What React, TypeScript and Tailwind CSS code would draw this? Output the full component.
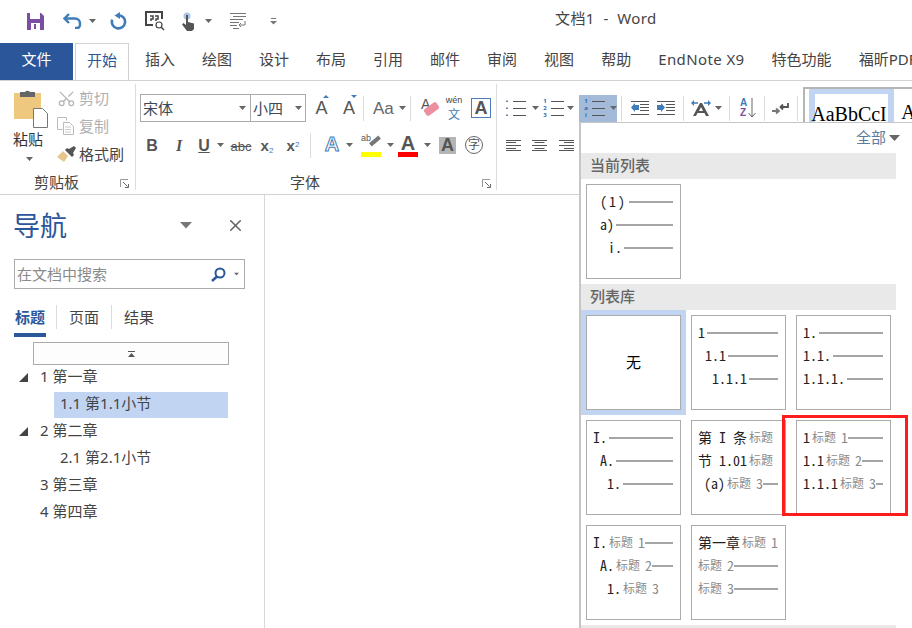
import { X, Scissors } from "lucide-react";

const CJK = { fontFamily: '"Noto Sans", "Noto Sans CJK SC", sans-serif' };

function Caret({ className = "" }: { className?: string }) {
  return (
    <svg width="7" height="4" viewBox="0 0 7 4" className={`shrink-0 ${className}`}>
      <path d="M0 0h7L3.5 4z" fill="#666" />
    </svg>
  );
}

function Launcher() {
  return (
    <svg width="10" height="10" viewBox="0 0 10 10" className="shrink-0">
      <path d="M.5 8V.5H8" fill="none" stroke="#999" />
      <path d="M3 3l4.5 4.5M8.5 5v3.5H5" fill="none" stroke="#666" />
    </svg>
  );
}

function Sep() {
  return <span className="block w-px h-[25px] bg-[#dcdcdc] shrink-0" />;
}

// letters used on toolbar buttons
function Glyph({ children, className = "" }: { children: React.ReactNode; className?: string }) {
  return (
    <span className={`font-['Liberation_Sans',sans-serif] leading-none ${className}`}>{children}</span>
  );
}

function ListLines({ dots }: { dots: string[] }) {
  return (
    <span className="flex flex-col gap-[3px]">
      {dots.map((d) => (
        <span key={d} className="flex items-center gap-[3px] h-[4px]">
          <span className="w-[6px] text-center text-[6px] leading-none text-[#2b6cb0] font-bold">{d}</span>
          <span className="w-[13px] h-px bg-[#555]" />
        </span>
      ))}
    </span>
  );
}

function AlignIcon({ kind }: { kind: "left" | "center" | "right" }) {
  const short =
    kind === "left" ? "M0 2.500h10M0 8.500h10" : kind === "center" ? "M2.500 2.500h10M2.500 8.500h10" : "M5 2.500h10M5 8.500h10";
  return (
    <svg width="15" height="11" viewBox="0 0 15 11">
      <path d={`M0 .5h15M0 5.500h15M0 10.500h15 ${short}`} stroke="#555" fill="none" />
    </svg>
  );
}

function TitleBar() {
  return (
    <div className="flex items-center h-[42px] pl-[27px]">
      <svg width="17" height="17" viewBox="0 0 17 17" className="shrink-0">
        <path d="M0 0h14l3 3v14H0z" fill="#7b4ea3" />
        <path d="M3 0h10v6H3z" fill="#fff" />
        <path d="M4 10h9v7H4z" fill="#fff" />
        <path d="M7 11h2v5H7z" fill="#7b4ea3" />
      </svg>
      <svg width="19" height="16" viewBox="0 0 19 16" className="ml-[19px] shrink-0">
        <path d="M6 1L1.5 5.5 6 10" fill="none" stroke="#3f7cb8" strokeWidth="2.4" />
        <path d="M2 5.5h10a5 5 0 0 1 5 5V12a3 3 0 0 1-3 3h-2" fill="none" stroke="#3f7cb8" strokeWidth="2.4" />
      </svg>
      <Caret className="ml-[7px]" />
      <svg width="18" height="18" viewBox="0 0 18 18" className="ml-[13px] shrink-0">
        <path d="M9.5 3.2a6.600 6.600 0 1 1-6.300 4.500" fill="none" stroke="#3f7cb8" strokeWidth="2.6" />
        <path d="M11 0v7L5.500 3.500z" fill="#3f7cb8" />
      </svg>
      <svg width="20" height="20" viewBox="0 0 20 20" className="ml-[18px] shrink-0">
        <path d="M1 9V1h16v7M1 1v13h7" fill="none" stroke="#444" strokeWidth="2" />
        <path d="M5 5h3v3H6v2M10 5h3v3h-2v2" fill="none" stroke="#444" strokeWidth="1.500" />
        <circle cx="14" cy="14" r="3" fill="none" stroke="#444" strokeWidth="1.200" />
        <path d="M16 16l3 3" stroke="#444" strokeWidth="1.400" />
      </svg>
      <svg width="15" height="19" viewBox="0 0 15 19" className="ml-[16px] shrink-0">
        <circle cx="6" cy="4" r="3.500" fill="#a9c4e6" />
        <path d="M5 3h2v7l6 1.500V17l-2 2H6L1 12.500 2.500 11 5 13z" fill="#555" />
      </svg>
      <Caret className="ml-[9px]" />
      <svg width="18" height="17" viewBox="0 0 18 17" className="ml-[17px] shrink-0">
        <path d="M1 .5h16M4 3.500h13M1 6.500h13M1 9.500h9M1 12.500h7M4 15.500h6" stroke="#777" fill="none" />
        <path d="M16 8v4h-6M12 10l-2 2 2 2" stroke="#777" fill="none" />
      </svg>
      <svg width="7" height="7" viewBox="0 0 7 7" className="ml-[23px] shrink-0">
        <path d="M1 .5h5" stroke="#777" />
        <path d="M0 3h7L3.500 6.500z" fill="#777" />
      </svg>
      <span className="ml-[278px] -mt-[6px] text-[15px] text-[#444] tracking-[0.4px] whitespace-pre">文档1  -  Word</span>
    </div>
  );
}

const tabs = ["插入", "绘图", "设计", "布局", "引用", "邮件", "审阅", "视图", "帮助", "EndNote X9", "特色功能", "福昕PDF"];

function TabBar() {
  return (
    <div className="flex items-end h-[39px] border-b border-[#d2d2d2] text-[15px] text-[#444] whitespace-nowrap overflow-hidden">
      <div className="w-[73px] shrink-0 h-[37px] pb-[4px] bg-[#2b579a] text-white flex items-center justify-center">文件</div>
      <div className="ml-[2px] w-[54px] shrink-0 h-[38px] pb-[4px] bg-white border-x border-t border-[#d2d2d2] text-[#2b579a] flex items-center justify-center -mb-px">
        开始
      </div>
      <div className="flex gap-[27px] ml-[16px] h-[37px] pb-[4px] items-center">
        {tabs.map((t) => (
          <span key={t} className={t === "EndNote X9" ? "tracking-[0.4px]" : ""}>
            {t}
          </span>
        ))}
      </div>
    </div>
  );
}

function Clipboard() {
  return (
    <div className="w-[136px] shrink-0 border-r border-[#dcdcdc] flex flex-col">
      <div className="flex h-[84px]">
        <div className="w-[57px] pl-[13px] flex flex-col items-start pt-[5px]">
          <svg width="35" height="39" viewBox="0 0 35 39" className="ml-[1px]">
            <path d="M0 4h27v26H0z" fill="#edc87e" />
            <path d="M6 3h5a3 3 0 0 1 5 0h5v5H6z" fill="#666" />
            <path d="M19.500 19.500h9l5 5v14h-14z" fill="#fff" stroke="#777" />
          </svg>
          <span className="text-[15px] leading-none mt-[4px] w-[30px] text-center text-[#333]">粘贴</span>
          <Caret className="ml-[13px] mt-[10px]" />
        </div>
        <div className="flex flex-col text-[15px] leading-none">
          <div className="h-[28px] flex items-center gap-[3px] text-[#b0b0b0]">
            <Scissors size={19} strokeWidth={1.6} className="text-[#b5b5b5] -rotate-90" />
            剪切
          </div>
          <div className="h-[28px] flex items-center gap-[5px] text-[#b0b0b0]">
            <svg width="17" height="18" viewBox="0 0 17 18">
              <path d="M.5.5h9v3M.5.5v12h5" fill="none" stroke="#bbb" />
              <path d="M6.500 5.500h6l4 4v8h-10z" fill="#fff" stroke="#bbb" />
              <path d="M8 10h6M8 12.500h6M8 15h6" stroke="#ccc" />
            </svg>
            复制
          </div>
          <div className="h-[28px] flex items-center gap-[3px] text-[#444]">
            <svg width="19" height="16" viewBox="0 0 19 16">
              <path d="M0 11l6-6 5 5-4 6z" fill="#e6c68a" />
              <path d="M8 4l2-2 2 1 5-3 2 2-3 5 1 2-2 2z" fill="#555" />
            </svg>
            格式刷
          </div>
        </div>
      </div>
      <div className="relative h-[22px] pt-[7px] text-[15px] text-[#444] flex items-center justify-center pr-[22px]">
        剪贴板
        <span className="absolute right-[5px] top-[11px]">
          <Launcher />
        </span>
      </div>
    </div>
  );
}

function FontGroup() {
  return (
    <div className="w-[361px] shrink-0 border-r border-[#dcdcdc] flex flex-col">
      <div className="h-[84px] pt-[10px]">
        <div className="flex items-center h-[28px] pl-[4px] text-[#444]">
          <div className="w-[111px] h-[28px] border border-[#ababab] flex items-center pl-[2px] pr-[4px] justify-between text-[15px] text-[#3a4a5a]">
            宋体
            <Caret />
          </div>
          <div className="w-[55px] h-[28px] border border-l-0 border-[#ababab] flex items-center pl-[2px] pr-[3px] justify-between text-[15px] text-[#3a4a5a]">
            小四
            <Caret />
          </div>
          <span className="relative w-[29px] ml-[1px] text-center">
            <Glyph className="text-[18px] text-[#555]">A</Glyph>
            <span className="absolute left-[16px] top-[-1px] w-0 h-0 border-x-[3px] border-x-transparent border-b-[3px] border-b-[#3f7cb8]" />
          </span>
          <span className="relative w-[26px] text-center">
            <Glyph className="text-[18px] text-[#555]">A</Glyph>
            <span className="absolute left-[15px] top-[-1px] w-0 h-0 border-x-[3px] border-x-transparent border-t-[3px] border-t-[#3f7cb8]" />
          </span>
          <span className="ml-[1px]">
            <Sep />
          </span>
          <span className="flex items-center w-[46px] pl-[9px] gap-[5px]">
            <Glyph className="text-[17px] text-[#666]">Aa</Glyph>
            <Caret />
          </span>
          <Sep />
          <span className="relative w-[32px] h-[24px]">
            <Glyph className="absolute left-[10px] top-[1px] text-[14px] text-[#555]">A</Glyph>
            <span className="absolute left-[13px] top-[9px] w-[15px] h-[8px] bg-[#ec8f9e] rounded-[2px] -rotate-[35deg]" />
          </span>
          <span className="w-[22px] h-[26px] flex flex-col items-center justify-between text-[#444]">
            <span className="text-[9px] leading-[11px] font-['Liberation_Sans',sans-serif]">wén</span>
            <span className="text-[12px] leading-[13px] text-[#3f7cb8]">文</span>
          </span>
          <span className="ml-[6px] w-[20px] h-[20px] border border-[#4a7ebb] flex items-center justify-center">
            <Glyph className="text-[18px] text-[#555] font-bold">A</Glyph>
          </span>
        </div>
        <div className="flex items-center h-[28px] mt-[9px] text-[#555]">
          <span className="w-[16px] ml-[8px] text-center">
            <Glyph className="text-[16px] font-bold">B</Glyph>
          </span>
          <span className="w-[16px] ml-[11px] text-center">
            <Glyph className="text-[16px] italic font-bold font-['Liberation_Serif',serif]">I</Glyph>
          </span>
          <span className="w-[16px] ml-[9px] text-center">
            <Glyph className="text-[16px] font-bold underline">U</Glyph>
          </span>
          <Caret className="ml-[5px]" />
          <span className="w-[22px] ml-[6px] text-center">
            <Glyph className="text-[13px] line-through">abc</Glyph>
          </span>
          <span className="w-[20px] ml-[5px] text-center">
            <Glyph className="text-[15px] font-bold">
              x<sub className="text-[8px] text-[#3f7cb8] font-normal">2</sub>
            </Glyph>
          </span>
          <span className="w-[20px] ml-[6px] text-center">
            <Glyph className="text-[15px] font-bold">
              x<sup className="text-[8px] text-[#3f7cb8] font-normal">2</sup>
            </Glyph>
          </span>
          <span className="ml-[7px]">
            <Sep />
          </span>
          <span className="w-[20px] ml-[11px] text-center">
            <Glyph className="text-[20px] font-bold text-white [-webkit-text-stroke:1px_#3f7cb8]">A</Glyph>
          </span>
          <Caret className="ml-[4px]" />
          <span className="relative w-[20px] h-[26px] ml-[8px]">
            <span className="absolute left-0 top-[2px] text-[9px] leading-none font-['Liberation_Sans',sans-serif]">ab</span>
            <span className="absolute left-[8px] top-[7px] w-[12px] h-[4px] bg-[#777] -rotate-[40deg]" />
            <span className="absolute left-0 bottom-[1px] w-[20px] h-[5px] bg-[#ffff00]" />
          </span>
          <Caret className="ml-[6px]" />
          <span className="relative w-[20px] h-[26px] ml-[4px] text-center">
            <Glyph className="text-[20px] font-bold">A</Glyph>
            <span className="absolute left-0 bottom-[1px] w-[20px] h-[5px] bg-[#ff0000]" />
          </span>
          <Caret className="ml-[6px]" />
          <span className="w-[17px] h-[17px] ml-[8px] bg-[#b5b5b5] flex items-center justify-center">
            <Glyph className="text-[18px] font-bold">A</Glyph>
          </span>
          <span className="w-[18px] h-[18px] ml-[9px] rounded-full border border-[#666] flex items-center justify-center text-[12px] leading-none">
            字
          </span>
        </div>
      </div>
      <div className="relative h-[22px] pt-[7px] text-[15px] text-[#444] flex items-center justify-center pr-[22px]">
        字体
        <span className="absolute right-[4px] top-[11px]">
          <Launcher />
        </span>
      </div>
    </div>
  );
}

function ParagraphGroup() {
  return (
    <div className="flex-1 min-w-0 overflow-hidden">
      <div className="h-[28px] mt-[10px] flex items-center">
        <span className="ml-[7px]">
          <ListLines dots={["•", "•", "•"]} />
        </span>
        <Caret className="ml-[6px]" />
        <span className="ml-[3px]">
          <ListLines dots={["1", "2", "3"]} />
        </span>
        <Caret className="ml-[3px]" />
        <span className="ml-[5px] w-[38px] h-[27px] bg-[#a3bad8] shrink-0 flex items-center pl-[4px] gap-[5px]">
          <ListLines dots={["1", "a", "i"]} />
          <Caret />
        </span>
        <span className="ml-[4px]">
          <Sep />
        </span>
        <svg width="18" height="14" viewBox="0 0 18 14" className="ml-[9px] shrink-0">
          <path d="M0 .5h18M9 3.500h9M9 6.500h9M9 9.500h9M0 13.500h18" stroke="#555" fill="none" />
          <path d="M8 4H4V2L0 6.500 4 11V9h4z" fill="#3f7cb8" />
        </svg>
        <svg width="18" height="14" viewBox="0 0 18 14" className="ml-[8px] shrink-0">
          <path d="M0 .5h18M9 3.500h9M9 6.500h9M9 9.500h9M0 13.500h18" stroke="#555" fill="none" />
          <path d="M0 4h4V2l4 4.500L4 11V9H0z" fill="#3f7cb8" />
        </svg>
        <span className="ml-[8px]">
          <Sep />
        </span>
        <svg width="20" height="16" viewBox="0 0 20 16" className="ml-[7px] shrink-0">
          <path d="M1 3h6M13 3h6" stroke="#3f7cb8" strokeWidth="1.500" />
          <path d="M3 0L0 3l3 3zM17 0l3 3-3 3z" fill="#3f7cb8" />
          <path d="M2 16L9 3h2l7 13h-3l-1.500-3h-7L5 16zM8 11h4l-2-4z" fill="#555" />
        </svg>
        <Caret className="ml-[4px]" />
        <span className="ml-[7px]">
          <Sep />
        </span>
        <span className="ml-[10px] flex items-center">
          <span className="flex flex-col font-['Liberation_Sans',sans-serif] text-[10px] leading-[10px] font-bold">
            <span className="text-[#3f7cb8]">A</span>
            <span className="text-[#7b4ea3]">Z</span>
          </span>
          <svg width="8" height="20" viewBox="0 0 8 20" className="ml-[1px]">
            <path d="M4 0v19M.5 15L4 19l3.500-4" stroke="#666" fill="none" />
          </svg>
        </span>
        <span className="ml-[8px]">
          <Sep />
        </span>
        <svg width="17" height="13" viewBox="0 0 17 13" className="ml-[7px] shrink-0">
          <path d="M16 1v4H9M11 2.500L8.500 5 11 7.500" stroke="#555" strokeWidth="1.800" fill="none" />
          <path d="M0 9h6M4 6.500L7 9l-3 2.500" stroke="#777" strokeWidth="1.800" fill="none" />
        </svg>
        <span className="ml-[8px]">
          <Sep />
        </span>
        <div className="ml-[5px] h-[35px] -mt-[7px] -mb-[7px] flex-1 border-t-2 border-l-2 border-[#b5b5b5] pl-[4px] self-start overflow-hidden">
          <div className="flex h-full items-end">
            <span className="w-[85px] shrink-0 h-full border-x-[6px] border-t-[5px] border-[#c1d5f2] text-[20px] leading-none font-['Liberation_Serif',serif] text-black pt-[10px] whitespace-nowrap">
              <span className="relative -ml-[4px]">AaBbCcI</span>
            </span>
            <span className="ml-[7px] text-[20px] leading-none font-['Liberation_Serif',serif] text-black">A</span>
          </div>
        </div>
      </div>
      <div className="flex items-center h-[28px] mt-[9px] pl-[9px] gap-[11px]">
        <AlignIcon kind="left" />
        <AlignIcon kind="center" />
        <span className="ml-[1px]">
          <AlignIcon kind="right" />
        </span>
      </div>
    </div>
  );
}

function Ribbon() {
  return (
    <div className="flex h-[114px] pt-[3px] pb-[4px] border-b border-[#d2d2d2] overflow-hidden">
      <Clipboard />
      <FontGroup />
      <ParagraphGroup />
    </div>
  );
}

const tree = [
  { text: "1 第一章", arrow: true },
  { text: "1.1 第1.1小节", sub: true, active: true },
  { text: "2 第二章", arrow: true },
  { text: "2.1 第2.1小节", sub: true },
  { text: "3 第三章" },
  { text: "4 第四章" },
];

function NavPane() {
  return (
    <div className="w-[265px] shrink-0 border-r border-[#d8d8d8] text-[15px] text-[#444]">
      <div className="flex items-center h-[60px] pl-[13px] pr-[19px]">
        <span className="text-[27px] leading-none text-[#2b579a]">导航</span>
        <svg width="13" height="7" viewBox="0 0 13 7" className="ml-auto mr-[33px]">
          <path d="M0 0h12L6 6.500z" fill="#777" />
        </svg>
        <X size={19} strokeWidth={2} className="text-[#666]" />
      </div>
      <div className="ml-[14px] mt-[4px] w-[231px] h-[30px] border border-[#ababab] flex items-center pl-[2px] pr-[4px] text-[#8a8a8a]">
        在文档中搜索
        <svg width="15" height="15" viewBox="0 0 15 15" className="ml-auto">
          <circle cx="9" cy="6" r="4.500" fill="none" stroke="#2b579a" strokeWidth="2" />
          <path d="M6 9.500L1 14" stroke="#2b579a" strokeWidth="2.400" />
        </svg>
        <Caret className="ml-[7px] scale-75" />
      </div>
      <div className="flex items-start h-[34px] mt-[14px] ml-[14px]">
        <div className="w-[32px] h-[34px] border-b-4 border-[#2b579a] font-bold text-[#2b579a] text-center leading-[28px]">标题</div>
        <span className="w-px h-[24px] bg-[#dcdcdc] ml-[10px] mt-[2px]" />
        <span className="w-[54px] text-center leading-[28px]">页面</span>
        <span className="w-px h-[24px] bg-[#dcdcdc] mt-[2px]" />
        <span className="w-[54px] text-center leading-[28px]">结果</span>
      </div>
      <div className="ml-[33px] mt-[5px] w-[196px] h-[23px] border border-[#ababab] bg-[#fdfdfd] flex items-center justify-center">
        <svg width="7" height="6" viewBox="0 0 7 6">
          <path d="M0 .5h7" stroke="#555" />
          <path d="M0 6l3.500-4L7 6z" fill="#555" />
        </svg>
      </div>
      <div className="flex flex-col -mt-px">
        {tree.map((row) => (
          <div key={row.text} className="h-[27px] flex items-end relative">
            {row.arrow && <span className="absolute left-[19px] top-[9px] w-0 h-0 border-l-[9px] border-l-transparent border-b-[9px] border-b-[#444]" />}
            {row.sub ? (
              <span className={`ml-[54px] w-[174px] h-[26px] pb-[3px] pl-[6px] flex items-center ${row.active ? "bg-[#c1d5f2]" : ""}`}>{row.text}</span>
            ) : (
              <span className="ml-[40px] h-[26px] pb-[3px] flex items-center">{row.text}</span>
            )}
          </div>
        ))}
      </div>
    </div>
  );
}

type Row = { pl: string; num?: string; numClass?: string; label?: string; digit?: string; noLine?: boolean };

function ThumbRow({ pl, num, numClass = "", label, digit, noLine }: Row) {
  return (
    <div className={`h-[23px] flex items-center whitespace-pre overflow-hidden ${pl}`}>
      {num && <span className={`shrink-0 pb-[2px] text-[#222] ${numClass}`}>{num}</span>}
      {label && <span className={`shrink-0 pb-[2px] text-[12px] text-[#8a8a8a] ${num ? "ml-[2px]" : ""}`}>{label}</span>}
      {digit && <span className="shrink-0 pb-[2px] ml-[5px] text-[#8a8a8a]">{digit}</span>}
      {!noLine && <span className={`flex-1 h-[2px] bg-[#a5a5a5] ${digit ? "" : "ml-[2px]"}`} />}
    </div>
  );
}

function Thumb({ rows }: { rows: Row[] }) {
  return (
    <div className="w-[95px] h-[95px] border border-[#ababab] bg-white pt-[5px] pr-[7px] font-['Noto_Sans_CJK_SC',sans-serif] [font-feature-settings:'hwid'] text-[14px] leading-[20px] overflow-hidden">
      {rows.map((r, i) => (
        <ThumbRow key={i} {...r} />
      ))}
    </div>
  );
}

const library: Row[][] = [
  [
    { pl: "pl-[6px]", num: "1" },
    { pl: "pl-[13px]", num: "1.1" },
    { pl: "pl-[20px]", num: "1.1.1" },
  ],
  [
    { pl: "pl-[6px]", num: "1." },
    { pl: "pl-[6px]", num: "1.1." },
    { pl: "pl-[6px]", num: "1.1.1." },
  ],
  [
    { pl: "pl-[6px]", num: "I." },
    { pl: "pl-[13px]", num: "A." },
    { pl: "pl-[20px]", num: "1." },
  ],
  [
    { pl: "pl-[6px]", num: "第 I 条", label: "标题", noLine: true },
    { pl: "pl-[6px]", num: "节 1.01", label: "标题", noLine: true },
    { pl: "pl-[12px]", num: "(a)", label: "标题", digit: "3" },
  ],
  [
    { pl: "pl-[6px]", num: "1", label: "标题", digit: "1" },
    { pl: "pl-[6px]", num: "1.1", label: "标题", digit: "2" },
    { pl: "pl-[6px]", num: "1.1.1", label: "标题", digit: "3" },
  ],
  [
    { pl: "pl-[6px]", num: "I.", label: "标题", digit: "1" },
    { pl: "pl-[13px]", num: "A.", label: "标题", digit: "2" },
    { pl: "pl-[20px]", num: "1.", label: "标题", digit: "3", noLine: true },
  ],
  [
    { pl: "pl-[6px]", num: "第一章", label: "标题", digit: "1" },
    { pl: "pl-[6px]", label: "标题", digit: "2" },
    { pl: "pl-[6px]", label: "标题", digit: "3" },
  ],
];

function ListMenu() {
  return (
    <div className="absolute left-[579px] top-[122px] w-[333px] h-[506px] bg-white border-l-2 border-t border-[#c6c6c6] text-[15px] overflow-hidden">
      <div className="h-[30px] pr-[12px] pb-[1px] flex items-center justify-end gap-[3px] text-[#5d7b9c]">
        全部
        <svg width="11" height="6" viewBox="0 0 11 6">
          <path d="M0 0h11L5.500 6z" fill="#666" />
        </svg>
      </div>
      <div className="w-[315px] h-[26px] bg-[#e9e9e9] pl-[9px] pb-[2px] flex items-center font-medium text-[#666]">当前列表</div>
      <div className="pl-[5px] pt-[5px] h-[105px]">
        <Thumb
          rows={[
            { pl: "pl-[13px]", num: "(1)", numClass: "tracking-[2px]" },
            { pl: "pl-[13px]", num: "a)" },
            { pl: "pl-[21px]", num: "i." },
          ]}
        />
      </div>
      <div className="w-[315px] h-[26px] bg-[#e9e9e9] pl-[9px] pb-[2px] flex items-center font-medium text-[#666]">列表库</div>
      <div className="grid grid-cols-[95px_95px_95px] auto-rows-[95px] gap-x-[10px] gap-y-[10px] pl-[5px] pt-[5px]">
        <div className="w-[95px] h-[95px] border border-[#ababab] flex items-center justify-center text-black outline-[5px] outline-[#c1d5f2]">
          无
        </div>
        {library.map((rows, i) => (
          <Thumb key={i} rows={rows} />
        ))}
      </div>
      <div className="absolute left-0 top-[502px] w-[315px] h-[6px] bg-[#e9e9e9]" />
    </div>
  );
}

export default function App() {
  return (
    <div className="relative w-[912px] h-[628px] overflow-hidden bg-white flex flex-col" style={CJK}>
      <TitleBar />
      <TabBar />
      <Ribbon />
      <div className="flex flex-1 min-h-0">
        <NavPane />
        <div className="flex-1" />
      </div>
      <ListMenu />
      {/* red mark drawn over the screenshot */}
      <div className="absolute left-[782px] top-[415px] w-[126px] h-[101px] border-[3px] border-[#ff1c1c]" />
    </div>
  );
}
